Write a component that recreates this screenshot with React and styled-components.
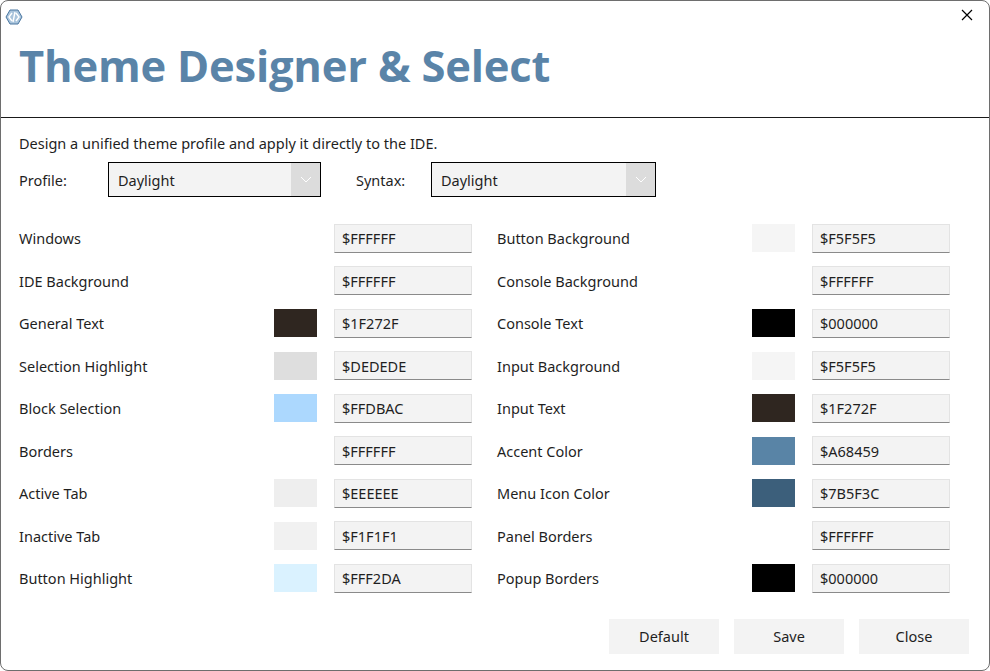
import React from "react";
import styled, { createGlobalStyle } from "styled-components";

const G = createGlobalStyle`
  html,body{margin:0;padding:0;background:#fff;}
  body{font-family:"Noto Sans","Open Sans",sans-serif;color:#1f1f1f;}
`;
const Win = styled.div`
  width:990px;height:671px;box-sizing:border-box;border:1px solid #6e6e6e;border-radius:8px;
  display:flex;flex-direction:column;overflow:hidden;background:#fff;
`;
const Header = styled.div`
  height:116px;border-bottom:1px solid #1a1a1a;display:flex;flex-direction:column;padding:0 0 0 18px;
`;
const TopBar = styled.div`display:flex;justify-content:space-between;align-items:center;height:32px;margin-left:-14px;`;
const CloseX = styled.div`width:44px;height:32px;display:flex;align-items:center;justify-content:center;margin-top:-4px;`;
const Title = styled.h1`
  margin:0;margin-top:3px;font-family:"Open Sans","Noto Sans",sans-serif;font-weight:700;font-size:43.5px;line-height:60px;color:#5a84a8;letter-spacing:-0.2px;
`;
const Body = styled.div`padding:15px 20px 0 18px;display:flex;flex-direction:column;flex:1;`;
const Desc = styled.div`font-size:14.5px;line-height:20px;`;
const ProfRow = styled.div`display:flex;align-items:center;margin-top:9px;height:35px;`;
const Lbl = styled.div`font-size:14.5px;width:${p=>p.w}px;`;
const Combo = styled.div`
  width:${p=>p.w}px;height:35px;box-sizing:border-box;border:1px solid #000;background:#f3f3f3;display:flex;align-items:center;
  font-size:14.5px;padding-left:9px;justify-content:space-between;margin-right:${p=>p.mr||0}px;
`;
const Arrow = styled.div`width:29px;height:33px;background:#dcdcdc;display:flex;align-items:center;justify-content:center;`;
const Cols = styled.div`display:grid;grid-template-columns:478px 453px;margin-top:20px;row-gap:0;`;
const Col = styled.div`display:flex;flex-direction:column;`;
const Row = styled.div`display:flex;align-items:center;height:42.5px;`;
const Name = styled.div`font-size:14.5px;width:${p=>p.w}px;`;
const Swatch = styled.div`width:43px;height:28px;background:${p=>p.c};margin-right:17px;`;
const Input = styled.div`
  width:138px;height:29px;box-sizing:border-box;background:#f3f3f3;border:1px solid #e3e3e3;border-bottom:1px solid #8a8a8a;
  font-size:14.5px;padding-left:7px;display:flex;align-items:center;
`;
const Btns = styled.div`display:flex;justify-content:flex-end;gap:15px;margin-top:19px;`;
const Btn = styled.div`width:110px;height:35px;background:#f3f3f3;display:flex;align-items:center;justify-content:center;font-size:14.5px;`;

const left=[["Windows",null,"$FFFFFF"],["IDE Background",null,"$FFFFFF"],["General Text","#2f2620","$1F272F"],["Selection Highlight","#dedede","$DEDEDE"],["Block Selection","#acd8fe","$FFDBAC"],["Borders",null,"$FFFFFF"],["Active Tab","#eeeeee","$EEEEEE"],["Inactive Tab","#f1f1f1","$F1F1F1"],["Button Highlight","#daf2ff","$FFF2DA"]];
const right=[["Button Background","#f5f5f5","$F5F5F5"],["Console Background",null,"$FFFFFF"],["Console Text","#000","$000000"],["Input Background","#f5f5f5","$F5F5F5"],["Input Text","#2f2620","$1F272F"],["Accent Color","#5984a6","$A68459"],["Menu Icon Color","#3c5f7b","$7B5F3C"],["Panel Borders",null,"$FFFFFF"],["Popup Borders","#000","$000000"]];

const Chev=()=>(<svg width="12" height="7" viewBox="0 0 12 7"><path d="M1 1l5 5 5-5" fill="none" stroke="#fff" strokeWidth="1"/></svg>);

export default function App(){
  const col=(items)=>items.map(([n,c,v])=>(<Row key={n}><Name w={255}>{n}</Name><Swatch c={c||"transparent"}/><Input>{v}</Input></Row>));
  return (<><G/><Win>
    <Header>
      <TopBar>
        <svg width="18" height="16" viewBox="0 0 18 16"><path d="M5 1L1 8l4 7h8l4-7-4-7z" fill="#a9c4dc" stroke="#4a76a0"/><path d="M7 4L4 8l3 4M11 4l3 4-3 4M10 3l-2 10" fill="none" stroke="#fff" strokeWidth="1.4"/></svg>
        <CloseX><svg width="12" height="12" viewBox="0 0 12 12"><path d="M1 1l10 10M11 1L1 11" stroke="#000" strokeWidth="1.2"/></svg></CloseX>
      </TopBar>
      <Title>Theme Designer &amp; Select</Title>
    </Header>
    <Body>
      <Desc>Design a unified theme profile and apply it directly to the IDE.</Desc>
      <ProfRow>
        <Lbl w={89}>Profile:</Lbl>
        <Combo w={213} mr={35}>Daylight<Arrow><Chev/></Arrow></Combo>
        <Lbl w={75}>Syntax:</Lbl>
        <Combo w={225}>Daylight<Arrow><Chev/></Arrow></Combo>
      </ProfRow>
      <Cols><Col>{col(left)}</Col><Col>{col(right)}</Col></Cols>
      <Btns><Btn>Default</Btn><Btn>Save</Btn><Btn>Close</Btn></Btns>
    </Body>
  </Win></>);
}
